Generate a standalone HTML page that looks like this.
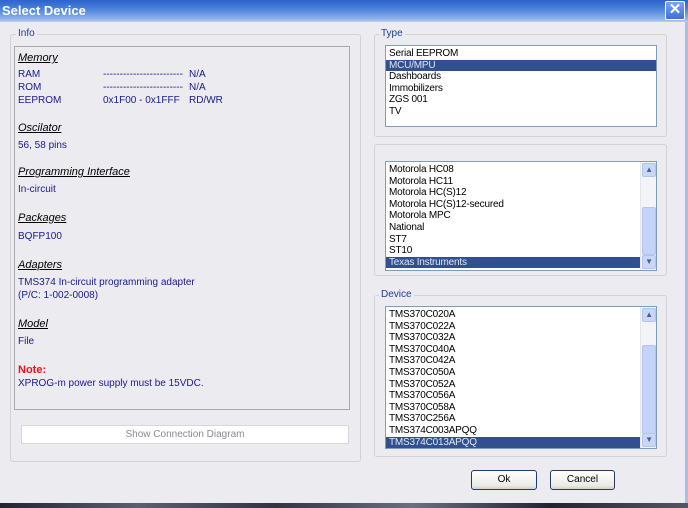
<!DOCTYPE html>
<html><head><style>
*{margin:0;padding:0;box-sizing:border-box}
body{width:688px;height:508px;overflow:hidden;background:#ecebf0;font-family:"Liberation Sans",sans-serif;position:relative}
.title{position:absolute;left:0;top:0;width:688px;height:22px;background:linear-gradient(#2c62cc,#4f86dc 45%,#8fb1e8 85%,#b9cdf0);color:#fff;font-weight:bold;font-size:13px;line-height:21px;padding-left:2px}
.close{position:absolute;left:665px;top:1px;width:20px;height:19px;background:linear-gradient(#7aa6f0,#3d6fd8);border:1px solid #fff;border-radius:2px;color:#fff;font-size:15px;line-height:16px;text-align:center;font-weight:bold}
.rb{position:absolute;left:685px;top:22px;width:3px;height:482px;background:#a8c0e8}
.grp{position:absolute;border:1px solid #d2d0d8;border-radius:3px}
.lg{position:absolute;background:#ecebf0;font-size:10px;color:#1e3d8f;padding:0 2px}
.panel{position:absolute;left:14px;top:46px;width:336px;height:364px;border:1px solid #a9a9b0;background:#ecebf0;color:#1a1a8a;font-size:10px}
.panel div{position:absolute;left:3px;white-space:pre}
.h{font-style:italic;text-decoration:underline;color:#000;font-size:11px}
.list{position:absolute;background:#fff;border:1px solid #7f9db9;font-size:10px;color:#000;letter-spacing:-0.2px}
.list div{height:11.6px;line-height:11.6px;padding-left:3px;white-space:nowrap}
.sel{background:#32508f;color:#dfe6f5}
.sb{position:absolute;right:0;top:0;bottom:0;width:16px;background:#f3f4f8;border-left:1px solid #e4e6ee;display:block}
.sb .a{position:absolute;display:block;left:1px;width:14px;height:14px;background:#c8d6f8;border:1px solid #b3c4ef;border-radius:2px;font-size:8px;color:#4d6185;text-align:center;line-height:12px}
.sb .t{position:absolute;display:block;left:1px;width:14px;background:#c4d3f7;border:1px solid #b3c4ef;border-radius:2px}
.btn{position:absolute;border:1px solid #1c3a78;border-radius:3px;background:linear-gradient(#fff,#ecebe6 80%,#d6d0c5);font-size:10px;text-align:center;line-height:17px;color:#000}
.bottom{position:absolute;left:0;top:503px;width:688px;height:5px;background:linear-gradient(90deg,#223,#5a6070,#334,#6a7080,#223,#556)}
</style></head><body>
<div class="title">Select Device</div>
<div class="close">✕</div>
<div class="rb"></div>

<div class="grp" style="left:10px;top:34px;width:351px;height:428px"></div>
<div class="lg" style="left:16px;top:28px">Info</div>
<div class="panel">
<div class="h" style="top:5px">Memory</div>
<div style="top:22px">RAM</div><div style="top:22px;left:88px">------------------------</div><div style="top:22px;left:174px">N/A</div>
<div style="top:35px">ROM</div><div style="top:35px;left:88px">------------------------</div><div style="top:35px;left:174px">N/A</div>
<div style="top:48px">EEPROM</div><div style="top:48px;left:88px">0x1F00 - 0x1FFF</div><div style="top:48px;left:174px">RD/WR</div>
<div class="h" style="top:75px">Oscilator</div>
<div style="top:93px">56, 58 pins</div>
<div class="h" style="top:119px">Programming Interface</div>
<div style="top:137px">In-circuit</div>
<div class="h" style="top:165px">Packages</div>
<div style="top:184px">BQFP100</div>
<div class="h" style="top:212px">Adapters</div>
<div style="top:230px">TMS374 In-circuit programming adapter</div>
<div style="top:243px">(P/C: 1-002-0008)</div>
<div class="h" style="top:271px">Model</div>
<div style="top:289px">File</div>
<div style="top:317px;color:#e01818;font-weight:bold;font-size:11px">Note:</div>
<div style="top:331px">XPROG-m power supply must be 15VDC.</div>
</div>
<div style="position:absolute;left:21px;top:425px;width:328px;height:19px;background:#fff;border:1px solid #d6d6dc;font-size:10px;color:#8a8a90;text-align:center;line-height:17px">Show Connection Diagram</div>

<div class="grp" style="left:374px;top:34px;width:293px;height:103px"></div>
<div class="lg" style="left:379px;top:28px">Type</div>
<div class="list" style="left:385px;top:45px;width:272px;height:82px;padding-top:2px">
<div>Serial EEPROM</div><div class="sel">MCU/MPU</div><div>Dashboards</div><div>Immobilizers</div><div>ZGS 001</div><div>TV</div>
</div>

<div class="grp" style="left:374px;top:144px;width:293px;height:132px"></div>
<div class="list" style="left:385px;top:161px;width:272px;height:110px;padding-top:2px">
<div>Motorola HC08</div><div>Motorola HC11</div><div>Motorola HC(S)12</div><div>Motorola HC(S)12-secured</div><div>Motorola MPC</div><div>National</div><div>ST7</div><div>ST10</div><div class="sel" style="margin-right:16px">Texas Instruments</div>
<span class="sb"><span class="a" style="top:1px">▲</span><span class="t" style="top:45px;height:48px"></span><span class="a" style="bottom:1px">▼</span></span>
</div>

<div class="grp" style="left:374px;top:295px;width:293px;height:162px"></div>
<div class="lg" style="left:379px;top:289px">Device</div>
<div class="list" style="left:385px;top:306px;width:272px;height:143px;padding-top:2px">
<div>TMS370C020A</div><div>TMS370C022A</div><div>TMS370C032A</div><div>TMS370C040A</div><div>TMS370C042A</div><div>TMS370C050A</div><div>TMS370C052A</div><div>TMS370C056A</div><div>TMS370C058A</div><div>TMS370C256A</div><div>TMS374C003APQQ</div><div class="sel" style="margin-right:16px">TMS374C013APQQ</div>
<span class="sb"><span class="a" style="top:1px">▲</span><span class="t" style="top:38px;height:89px"></span><span class="a" style="bottom:1px">▼</span></span>
</div>

<div class="btn" style="left:471px;top:470px;width:66px;height:20px">Ok</div>
<div class="btn" style="left:550px;top:470px;width:65px;height:20px;border-color:#2a3a5a">Cancel</div>
<div class="bottom"></div>
</body></html>
